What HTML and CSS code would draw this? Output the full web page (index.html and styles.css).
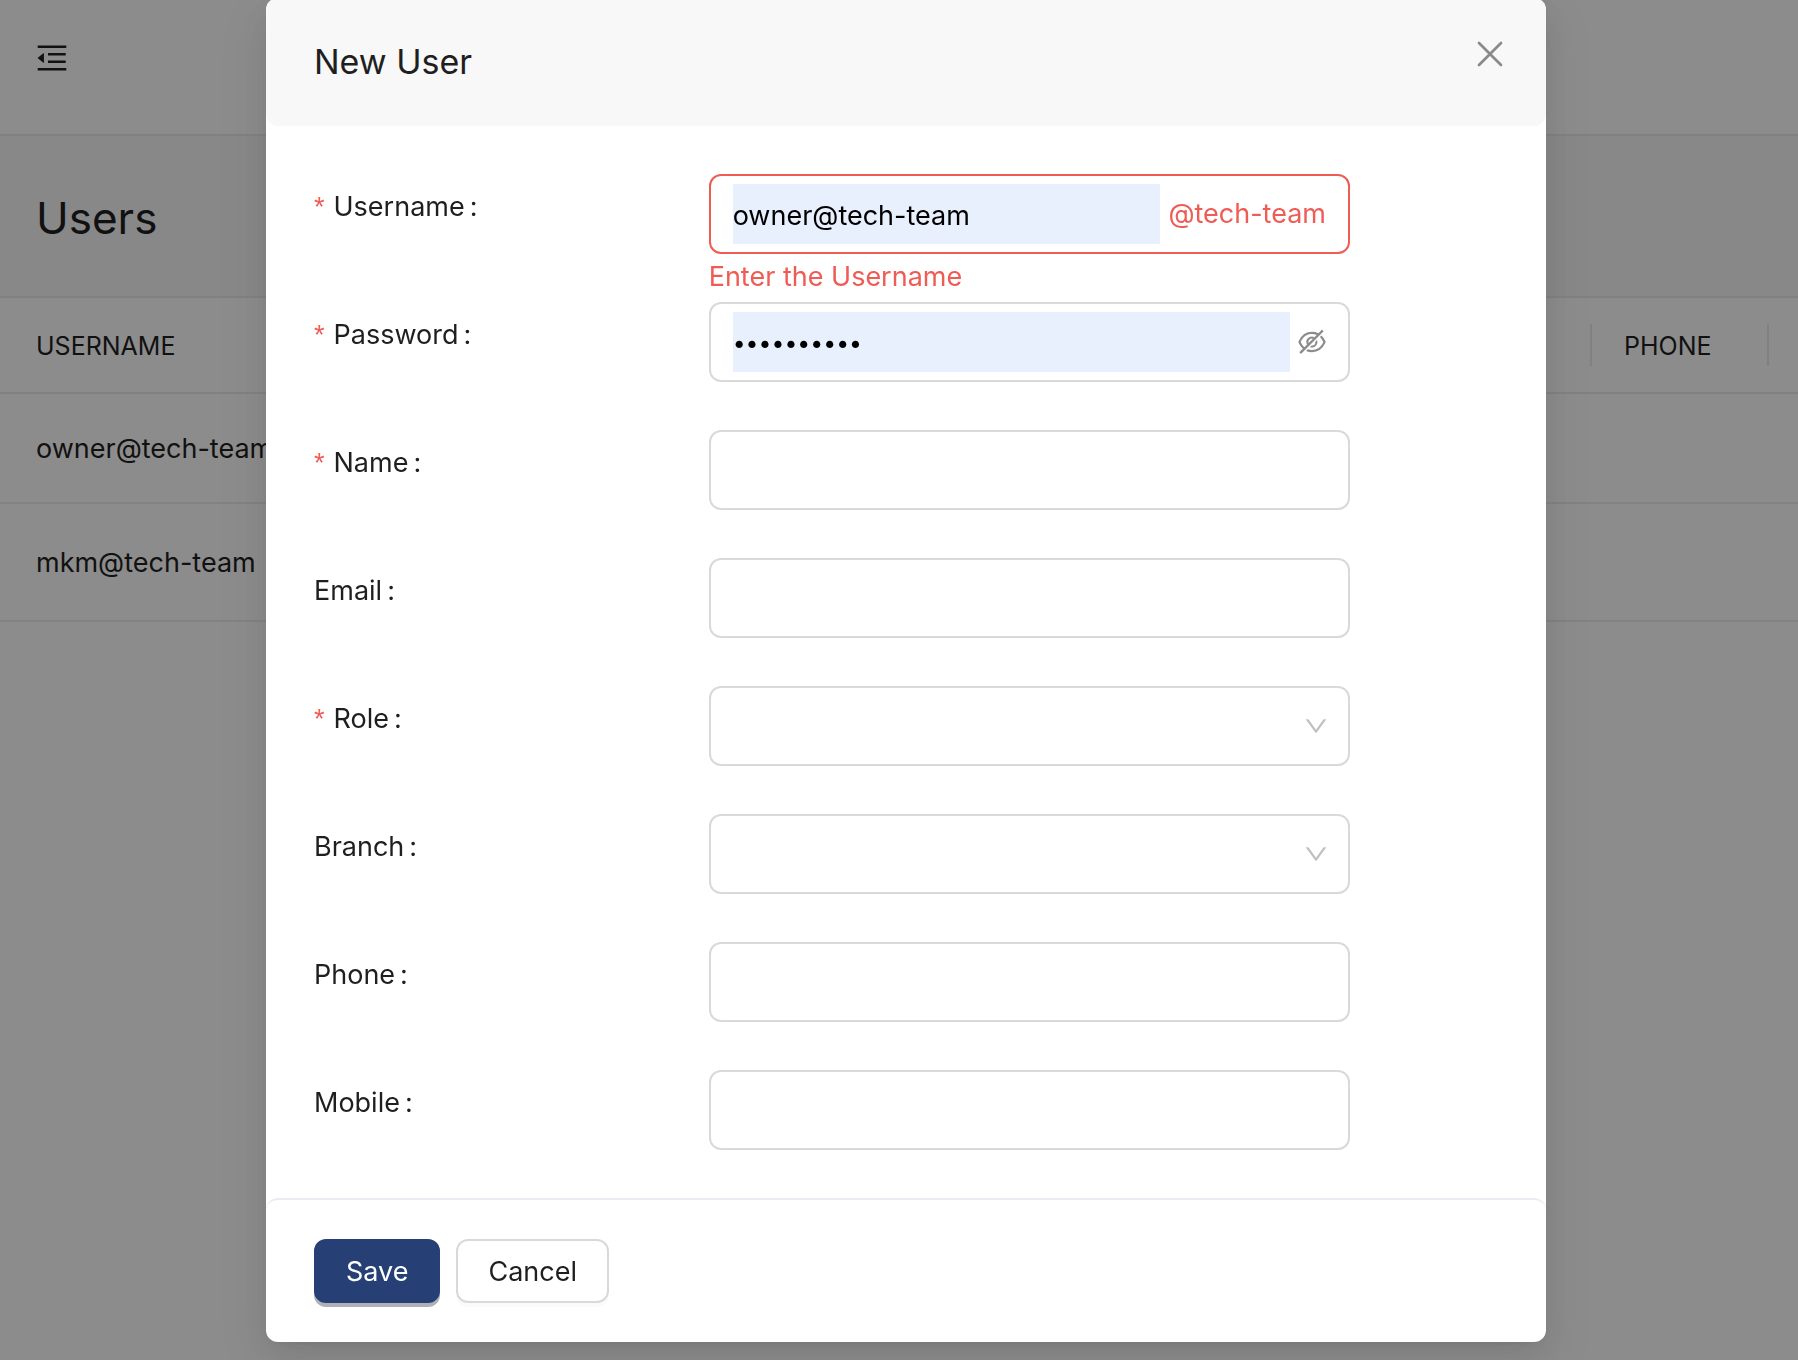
FILE: index.html
```html
<!DOCTYPE html>
<html lang="en">
<head>
  <meta charset="utf-8">
  <meta name="viewport" content="width=device-width, initial-scale=1">
  <title>Users</title>
  <link rel="stylesheet" href="styles.css">
</head>
<body>
  <div class="page">
    <header class="topbar">
      <button class="icon-button" type="button" aria-label="Collapse menu">
        <svg width="32" height="32" viewBox="64 64 896 896" fill="currentColor" aria-hidden="true"><path d="M408 442h480c4.400 0 8-3.600 8-8v-56c0-4.400-3.600-8-8-8H408c-4.400 0-8 3.600-8 8v56c0 4.400 3.600 8 8 8zm-8 204c0 4.400 3.600 8 8 8h480c4.400 0 8-3.600 8-8v-56c0-4.400-3.600-8-8-8H408c-4.400 0-8 3.600-8 8v56zm504-486H120c-4.400 0-8 3.600-8 8v56c0 4.400 3.600 8 8 8h784c4.400 0 8-3.600 8-8v-56c0-4.400-3.600-8-8-8zm0 632H120c-4.400 0-8 3.600-8 8v56c0 4.400 3.600 8 8 8h784c4.400 0 8-3.600 8-8v-56c0-4.400-3.600-8-8-8zM115.400 518.900L271.700 642c5.800 4.600 14.400.5 14.400-6.900V388.900c0-7.400-8.500-11.500-14.400-6.900L115.400 505.100a8.740 8.740 0 000 13.800z"/></svg>
      </button>
    </header>
    <section class="page-title"><h1>Users</h1></section>
    <table class="users">
      <colgroup><col class="col-user"><col class="col-rest"><col class="col-phone"><col class="col-last"></colgroup>
      <thead>
        <tr><th scope="col">USERNAME</th><td></td><th scope="col">PHONE</th><td></td></tr>
      </thead>
      <tbody>
        <tr><td>owner@tech-team</td><td></td><td></td><td></td></tr>
        <tr class="tall"><td>mkm@tech-team</td><td></td><td></td><td></td></tr>
      </tbody>
    </table>
  </div>

  <div class="mask">
    <div class="modal" role="dialog" aria-modal="true" aria-labelledby="dialog-title">
      <header class="modal-header">
        <h2 id="dialog-title">New User</h2>
        <button class="icon-button close" type="button" aria-label="Close">
          <svg width="32" height="32" viewBox="0 0 32 32" fill="none" stroke="currentColor" stroke-width="2.700" stroke-linecap="round" aria-hidden="true"><path d="M5 5l22 22M27 5L5 27"/></svg>
        </button>
      </header>
      <form id="user-form" class="modal-body">
        <div class="form-row">
          <label class="required" for="username">Username</label>
          <div class="control">
            <div class="field error">
              <input class="filled" id="username" type="text" value="owner@tech-team" aria-describedby="username-error">
              <span class="suffix">@tech-team</span>
            </div>
            <div class="message" id="username-error">Enter the Username</div>
          </div>
        </div>
        <div class="form-row">
          <label class="required" for="password">Password</label>
          <div class="control">
            <div class="field">
              <input class="filled" id="password" type="password" value="abcdefghij">
              <button class="icon-button reveal" type="button" aria-label="Show password">
                <svg width="28" height="28" viewBox="64 64 896 896" fill="currentColor" aria-hidden="true"><path d="M942.200 486.200Q889.470 375.110 816.700 305l-50.880 50.880C807.310 395.530 843.450 447.400 874.700 512 791.500 684.200 673.400 766 512 766q-72.670 0-133.870-22.380L323 798.750Q408 838 512 838q288.300 0 430.200-300.300a60.290 60.290 0 000-51.500zm-63.570-320.640L836 122.880a8 8 0 00-11.320 0L715.310 232.200Q624.860 186 512 186q-288.300 0-430.200 300.300a60.300 60.300 0 000 51.500q56.690 119.400 136.500 191.410L112.480 835a8 8 0 000 11.310L155.170 889a8 8 0 0011.310 0l712.150-712.120a8 8 0 000-11.320zM149.300 512C232.600 339.800 350.700 258 512 258c54.540 0 104.130 9.360 149.120 28.390l-70.300 70.300a176 176 0 00-238.130 238.130l-83.420 83.420C223.100 637.490 183.300 582.280 149.300 512zm246.700 0a112.110 112.110 0 01146.200-106.690L401.310 546.200A112 112 0 01396 512z"/><path d="M508 624c-3.460 0-6.870-.16-10.250-.47l-52.820 52.820a176.090 176.090 0 00227.420-227.420l-52.820 52.820c.31 3.380.47 6.790.47 10.250a111.940 111.940 0 01-112 112z"/></svg>
              </button>
            </div>
          </div>
        </div>
        <div class="form-row">
          <label class="required" for="name">Name</label>
          <div class="control"><div class="field"><input id="name" type="text"></div></div>
        </div>
        <div class="form-row">
          <label for="email">Email</label>
          <div class="control"><div class="field"><input id="email" type="email"></div></div>
        </div>
        <div class="form-row">
          <label class="required" for="role">Role</label>
          <div class="control"><div class="field">
            <select id="role"><option value=""></option></select>
            <svg class="arrow" width="24" height="24" viewBox="64 64 896 896" fill="currentColor" aria-hidden="true"><path d="M884 256h-75c-5.100 0-9.900 2.500-12.900 6.600L512 654.200 227.900 262.600c-3-4.100-7.800-6.600-12.900-6.600h-75c-6.500 0-10.300 7.400-6.500 12.700l352.600 486.100c12.800 17.600 39 17.600 51.700 0l352.600-486.100c3.900-5.300.1-12.700-6.400-12.700z"/></svg>
          </div></div>
        </div>
        <div class="form-row">
          <label for="branch">Branch</label>
          <div class="control"><div class="field">
            <select id="branch"><option value=""></option></select>
            <svg class="arrow" width="24" height="24" viewBox="64 64 896 896" fill="currentColor" aria-hidden="true"><path d="M884 256h-75c-5.100 0-9.900 2.500-12.900 6.600L512 654.200 227.900 262.600c-3-4.100-7.800-6.600-12.900-6.600h-75c-6.500 0-10.300 7.400-6.500 12.700l352.600 486.100c12.800 17.600 39 17.600 51.700 0l352.600-486.100c3.900-5.300.1-12.700-6.400-12.700z"/></svg>
          </div></div>
        </div>
        <div class="form-row">
          <label for="phone">Phone</label>
          <div class="control"><div class="field"><input id="phone" type="tel"></div></div>
        </div>
        <div class="form-row">
          <label for="mobile">Mobile</label>
          <div class="control"><div class="field"><input id="mobile" type="tel"></div></div>
        </div>
      </form>
      <footer class="modal-footer">
        <button class="button primary" type="submit" form="user-form">Save</button>
        <button class="button" type="button">Cancel</button>
      </footer>
    </div>
  </div>
</body>
</html>
```
FILE: styles.css
```css
:root {
  --text: #1f1f1f;
  --danger: #ef5b55;
  --border: #d9d9d9;
  --divider: #ebebf3;
  --radius: 12px;
}

* {
  box-sizing: border-box;
}

body {
  margin: 0;
  background: #fff;
  color: var(--text);
  font: 27px/46px Inter, "Liberation Sans", sans-serif;
}

h1,
h2 {
  margin: 0;
  font-weight: 400;
}

button,
input,
select {
  font: inherit;
  color: inherit;
}

.icon-button {
  display: flex;
  padding: 0;
  border: 0;
  background: none;
  cursor: pointer;
}

/* Page behind the dialog */
.page {
  min-height: 100vh;
  overflow: hidden;
}

.topbar {
  display: flex;
  align-items: center;
  height: 136px;
  padding: 0 36px 18px;
  border-bottom: 2px solid var(--divider);
}

.page-title {
  padding: 52px 36px 48px;
  background: #f8f8f8;
  border-bottom: 2px solid var(--divider);
}

.page-title h1 {
  font-size: 44px;
  line-height: 60px;
}

.users {
  width: 100%;
  table-layout: fixed;
  border-spacing: 0;
}

.col-user {
  width: 32%;
}

.col-phone {
  width: 177px;
}

.col-last {
  width: 29px;
}

.users th,
.users td {
  height: 110px;
  padding: 2px 32px 0 36px;
  border-bottom: 2px solid #ededed;
  text-align: left;
  white-space: nowrap;
}

.users td:last-child {
  padding: 0;
}

.users .tall td {
  height: 118px;
}

.users thead th,
.users thead td {
  position: relative;
  height: 96px;
  border-bottom-color: var(--divider);
  font-size: 25px;
  font-weight: 400;
}

.users thead th + td + th {
  padding-left: 32px;
}

.users thead tr > :not(:last-child)::after {
  content: "";
  position: absolute;
  top: 26px;
  right: 0;
  width: 2px;
  height: 42px;
  background: #ececec;
}

/* Dialog */
.mask {
  position: fixed;
  inset: 0;
  padding-left: 14px;
  overflow: auto;
  background: rgba(0, 0, 0, 0.45);
}

.modal {
  max-width: 1280px;
  margin: -2px auto 0;
  border-radius: var(--radius);
  background: #fff;
  box-shadow:
    0 12px 32px rgba(0, 0, 0, 0.08),
    0 6px 12px -8px rgba(0, 0, 0, 0.12),
    0 18px 56px 16px rgba(0, 0, 0, 0.05);
}

.modal-header {
  display: flex;
  align-items: flex-start;
  justify-content: space-between;
  padding: 40px;
  padding-left: 48px;
  border-radius: var(--radius);
  background: #f8f8f8;
}

.modal-header h2 {
  font-size: 34px;
  line-height: 48px;
}

.close {
  color: #8a8a8a;
}

.modal-body {
  padding: 48px 48px 0;
}

.form-row {
  display: grid;
  grid-template-columns: 8fr 13fr 3fr;
  height: 128px;
}

.form-row label {
  justify-self: start;
  line-height: 66px;
}

.form-row label::after {
  content: ":";
  margin-left: 5px;
}

.form-row .required::before {
  content: "*";
  margin-right: 9px;
  color: var(--danger);
  font-family: "Liberation Sans", sans-serif;
}

.field {
  position: relative;
  display: flex;
  align-items: center;
  gap: 8px;
  height: 80px;
  padding: 8px 22px;
  border: 2px solid var(--border);
  border-radius: var(--radius);
}

.field input,
.field select {
  flex: 1;
  min-width: 0;
  height: 60px;
  padding: 2px 0 0;
  border: 0;
  outline: 0;
  background: transparent;
  appearance: none;
}

.field .filled {
  background: #e8f0fe;
  color: #000;
}

.field input[type="password"] {
  font-size: 23px;
}

.field.error {
  border-color: var(--danger);
}

.suffix,
.message {
  color: var(--danger);
}

.reveal {
  color: #8c8c8c;
}

.arrow {
  position: absolute;
  right: 20px;
  color: #bfbfbf;
  pointer-events: none;
}

.modal-footer {
  display: flex;
  gap: 16px;
  padding: 39px 48px;
  border-top: 2px solid var(--divider);
  border-radius: var(--radius);
}

.button {
  height: 64px;
  padding: 2px 30px 0;
  border: 2px solid var(--border);
  border-radius: var(--radius);
  background: #fff;
  box-shadow: 0 4px 0 rgba(0, 0, 0, 0.02);
  cursor: pointer;
}

.button.primary {
  border-color: #263f75;
  background: #263f75;
  color: #fff;
  box-shadow: 0 4px 0 #b0b0b8;
}
```
